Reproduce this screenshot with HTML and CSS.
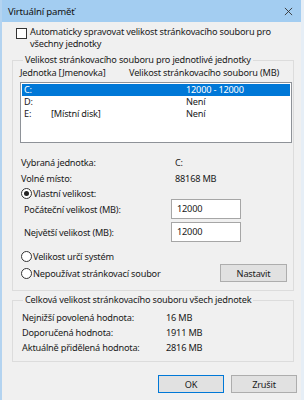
FILE: index.html
```html
<!DOCTYPE html>
<html lang="cs">
<head>
  <meta charset="UTF-8" />
  <title>Virtuální paměť</title>
  <link rel="stylesheet" href="styles.css">
</head>
<body>
  <div class="window">
    <div class="titlebar">
      <span class="title">Virtuální paměť</span>
      <svg class="close" viewBox="0 0 10 10" width="10" height="10">
        <path d="M1,1 L9,9 M9,1 L1,9" stroke="#333" stroke-width="1" fill="none"/>
      </svg>
    </div>

    <div class="content">
      <div class="check-row">
        <span class="checkbox"></span>
        <span class="check-text">Automaticky spravovat velikost stránkovacího souboru pro<br>všechny jednotky</span>
      </div>

      <fieldset class="group group-drives">
        <legend>Velikost stránkovacího souboru pro jednotlivé jednotky</legend>
        <div class="cols">
          <span class="col-drive">Jednotka [Jmenovka]</span>
          <span>Velikost stránkovacího souboru (MB)</span>
        </div>
        <div class="listbox">
          <div class="item selected"><span class="i-letter">C:</span><span class="i-label"></span><span>12000 - 12000</span></div>
          <div class="item"><span class="i-letter">D:</span><span class="i-label"></span><span>Není</span></div>
          <div class="item"><span class="i-letter">E:</span><span class="i-label">[Místní disk]</span><span>Není</span></div>
        </div>

        <div class="info">
          <div class="info-row"><span class="info-label">Vybraná jednotka:</span><span>C:</span></div>
          <div class="info-row"><span class="info-label">Volné místo:</span><span>88168 MB</span></div>
        </div>

        <div class="radio-row first"><span class="radio checked"></span><span>Vlastní velikost:</span></div>
        <div class="field-row"><span class="field-label">Počáteční velikost (MB):</span><span class="input">12000</span></div>
        <div class="field-row second"><span class="field-label">Největší velikost (MB):</span><span class="input">12000</span></div>
        <div class="radio-row system"><span class="radio"></span><span>Velikost určí systém</span></div>
        <div class="radio-row last">
          <span class="radio"></span><span>Nepoužívat stránkovací soubor</span>
          <span class="button set">Nastavit</span>
        </div>
      </fieldset>

      <fieldset class="group group-total">
        <legend>Celková velikost stránkovacího souboru všech jednotek</legend>
        <div class="total-row"><span class="total-label">Nejnižší povolená hodnota:</span><span>16 MB</span></div>
        <div class="total-row"><span class="total-label">Doporučená hodnota:</span><span>1911 MB</span></div>
        <div class="total-row"><span class="total-label">Aktuálně přidělená hodnota:</span><span>2816 MB</span></div>
      </fieldset>

      <div class="actions">
        <span class="button default">OK</span>
        <span class="button">Zrušit</span>
      </div>
    </div>
  </div>
</body>
</html>
```

FILE: styles.css
```css
body {
  margin: 0;
  background: #f0f0f0;
  font-family: 'Noto Sans', sans-serif;
  font-size: 9.2px;
  letter-spacing: -0.2px;
  color: #1a1a1a;
}
.window {
  box-sizing: border-box;
  width: 304px;
  height: 400px;
  background: #f0f0f0;
  border-left: 2px solid #b3d3f0;
  border-right: 3px solid #e6eef6;
  overflow: hidden;
}
.titlebar {
  display: flex;
  align-items: center;
  justify-content: space-between;
  height: 22px;
  margin: 0 -3px 0 -2px;
  padding: 0 8px 0 8px;
  background: #a3cdf1;
  font-size: 9.6px;
  color: #111;
}
.close {
  width: 9px;
  height: 9px;
  margin-right: 3px;
}
.content {
  padding: 0 0 0 10px;
}
.check-row {
  display: flex;
  align-items: flex-start;
  margin-top: 4px;
  line-height: 12px;
}
.checkbox {
  box-sizing: border-box;
  width: 11px;
  height: 11px;
  margin: 2px 3px 0 4px;
  border: 1px solid #333;
  background: #fff;
  flex: none;
}
.group {
  box-sizing: border-box;
  width: 282px;
  margin: 0;
  padding: 0 0 0 7px;
  border: 1px solid #dcdcdc;
  min-width: 0;
}
.group legend {
  margin-left: 3px;
  padding: 0 2px;
  line-height: 12px;
}
.group-drives {
  margin-top: 4px;
  padding-bottom: 8px;
}
.cols {
  display: flex;
  height: 12px;
  line-height: 12px;
  margin-top: 1px;
}
.col-drive {
  width: 109px;
}
.listbox {
  box-sizing: border-box;
  width: 272px;
  height: 61px;
  margin-top: 3px;
  padding: 1px;
  border: 1px solid #8e9298;
  background: #fff;
}
.item {
  display: flex;
  height: 12px;
  line-height: 12px;
  padding-left: 2px;
}
.item.selected {
  background: #0078d7;
  color: #fff;
}
.i-letter {
  width: 27px;
}
.i-label {
  width: 135px;
}
.info {
  margin-top: 11px;
}
.info-row {
  display: flex;
  height: 16px;
  align-items: center;
  padding-left: 1px;
}
.info-label {
  width: 154px;
}
.radio-row {
  display: flex;
  align-items: center;
  padding-left: 1px;
  height: 12px;
}
.radio-row.first {
  margin-top: 1px;
}
.radio-row.system {
  margin-top: 8px;
}
.radio-row.last {
  height: 18px;
  margin-top: 2px;
}
.radio {
  box-sizing: border-box;
  position: relative;
  width: 11px;
  height: 11px;
  margin-right: 1px;
  border: 1px solid #333;
  border-radius: 50%;
  background: #fff;
  flex: none;
}
.radio.checked::after {
  content: "";
  position: absolute;
  left: 2px;
  top: 2px;
  width: 5px;
  height: 5px;
  border-radius: 50%;
  background: #222;
}
.field-row {
  display: flex;
  align-items: center;
  height: 20px;
  padding-left: 4px;
}
.field-row.second {
  margin-top: 3px;
}
.field-label {
  width: 147px;
}
.input {
  box-sizing: border-box;
  width: 70px;
  height: 20px;
  padding: 2px 0 0 5px;
  border: 1px solid #a6a6a6;
  background: #fff;
  line-height: 14px;
}
.button {
  box-sizing: border-box;
  display: flex;
  align-items: center;
  justify-content: center;
  width: 66px;
  height: 18px;
  border: 1px solid #adadad;
  background: #e1e1e1;
}
.button.set {
  margin-left: auto;
  margin-right: 6px;
  width: 67px;
}
.button.default {
  border-color: #0078d7;
}
.group-total {
  margin-top: 3px;
  padding-top: 4px;
  padding-bottom: 6px;
}
.total-row {
  display: flex;
  align-items: center;
  height: 15px;
  padding-left: 2px;
}
.total-label {
  width: 144px;
}
.actions {
  display: flex;
  gap: 7px;
  margin-top: 13px;
  padding-left: 146px;
}
```
